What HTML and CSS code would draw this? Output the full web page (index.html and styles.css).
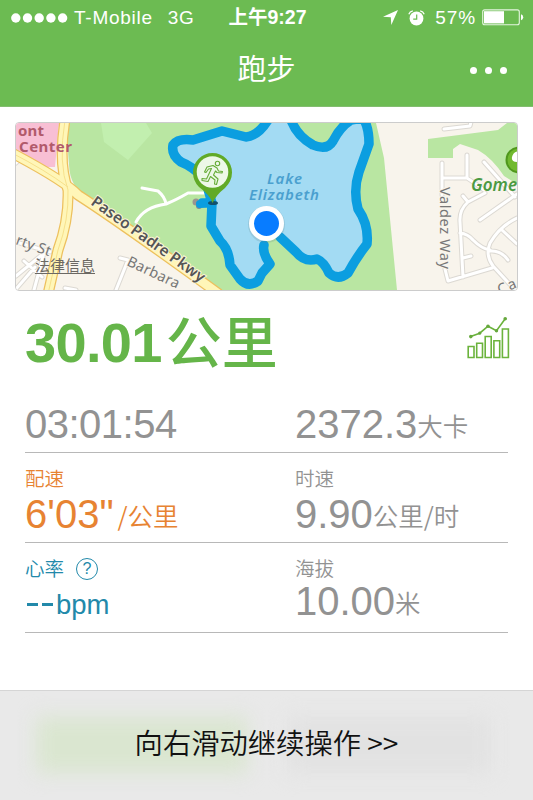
FILE: index.html
```html
<!DOCTYPE html>
<html lang="zh-CN">
<head>
<meta charset="utf-8">
<title>跑步</title>
<link rel="stylesheet" href="styles.css">
</head>
<body>
<div class="screen">
  <header class="header">
    <div class="status">
      <div class="status-left">
        <svg class="signal" width="57" height="10" viewBox="0 0 57 10"><g fill="#fff"><circle cx="4.8" cy="5" r="4.7"/><circle cx="16.5" cy="5" r="4.7"/><circle cx="28.2" cy="5" r="4.7"/><circle cx="39.9" cy="5" r="4.7"/><circle cx="51.6" cy="5" r="4.7"/></g></svg>
        <span class="carrier">T-Mobile</span>
        <span class="network">3G</span>
      </div>
      <div class="clock">上午9:27</div>
      <div class="status-right">
        <svg width="15" height="15" viewBox="0 0 15 15"><path d="M15 0L8.3 15L7.8 7.2L0 6.7Z" fill="#fff"/></svg>
        <svg class="alarm" width="17" height="16" viewBox="0 0 17 16"><circle cx="8.5" cy="8.500" r="6.900" fill="#fff"/><path d="M.8 4.200Q1.800 1.600 4.800.900M16.200 4.200Q15.200 1.600 12.200.900" stroke="#fff" stroke-width="1.200" fill="none"/><path d="M8.700 4.500V9.200H5.200" stroke="#6abb50" stroke-width="1.200" fill="none"/></svg>
        <span class="percent">57%</span>
        <svg class="battery" width="42" height="17" viewBox="0 0 42 17"><rect x=".7" y=".9" width="36.6" height="14.8" rx="2" fill="none" stroke="#e4f5df" stroke-width="1.1"/><rect x="2" y="2.2" width="20" height="12.2" fill="#fff"/><path d="M39 5.3Q41.2 6 41.2 8.3T39 11.3Z" fill="#fff"/></svg>
      </div>
    </div>
    <div class="navbar">
      <span></span>
      <h1 class="title">跑步</h1>
      <div class="more"><i></i><i></i><i></i></div>
    </div>
  </header>

  <main class="content">
    <div class="map">
      <svg class="map-art" viewBox="16 123 501 167" width="501" height="167">
        <rect x="16" y="123" width="501" height="167" fill="#f8f4ec"/>
        <path d="M66 123H376L384 158L397 290H219L180 259L88 198Q70 188 69 165Z" fill="#b9e6a2"/>
        <path d="M101 123L104 142L128 160L152 133L146 123Z" fill="#c2efaf"/>
        <path d="M16 123H59L55 167H45L16 153Z" fill="#f8bfd4"/>
        <path d="M428 139L498 130L507 123H517V184L504 176Q492 158 478 150L460 144L453 149V158H428Z" fill="#b9e6a2"/>
        <!-- minor streets -->
        <g fill="none" stroke-linecap="round" stroke-linejoin="round">
          <g stroke="#dcd9d3" stroke-width="5">
            <path d="M444 129L470 126L471 122M442 163V178H467V155M467 178Q475 183 484 190M484 162L515 197M442 178V195M445 269L448 281L492 268M463 196L468 202L485 193M517 194L480 220M468 202Q459 210 460 222L463 277M460 233Q468 234 473 240Q482 249 490 250M463 258L471 256M517 218Q500 226 490 243Q485 255 493 266L515 290M490 251Q501 250 508 260M502 230L517 244"/>
            <path d="M120 258L128 260L116 290M16 163L22 157M16 242L50 252M16 276L44 253L34 290M24 261L42 277M16 289L35 267M65 288L76 290"/>
          </g>
          <g stroke="#fff" stroke-width="3">
            <path d="M444 129L470 126L471 122M442 163V178H467V155M467 178Q475 183 484 190M484 162L515 197M442 178V195M445 269L448 281L492 268M463 196L468 202L485 193M517 194L480 220M468 202Q459 210 460 222L463 277M460 233Q468 234 473 240Q482 249 490 250M463 258L471 256M517 218Q500 226 490 243Q485 255 493 266L515 290M490 251Q501 250 508 260M502 230L517 244"/>
            <path d="M120 258L128 260L116 290M16 163L22 157M16 242L50 252M16 276L44 253L34 290M24 261L42 277M16 289L35 267M65 288L76 290"/>
          </g>
          <path d="M142 188L158 191Q165 197 166 204M136 222Q144 207 166 204Q176 200 188 193L204 193" stroke="#fff" stroke-width="3"/>
        </g>
        <!-- main roads -->
        <g fill="none" stroke-linejoin="round">
          <path d="M12 153Q65 181 78 195Q120 222 219 294M65 120Q58 163 68 190Q69 220 58 250L48 294" stroke="#edc05e" stroke-width="11"/>
          <path d="M12 153Q65 181 78 195Q120 222 219 294M65 120Q58 163 68 190Q69 220 58 250L48 294" stroke="#fff6b8" stroke-width="8.5"/>
          <path d="M65 120Q58 163 68 190Q69 220 58 250L48 294M12 153Q45 170 68 187" stroke="#f6e08c" stroke-width="1"/>
        </g>
        <!-- lake with the recorded track round it -->
        <path d="M205 179Q192 166 181 162Q171 155 173 145Q178 138 193 140L222 131L246 137Q258 136 267 123H293Q297 136 313 145Q327 151 333 141Q340 127 351 120L363 118Q369 127 369 144L359 172Q353 190 358 209Q369 225 367 244Q356 258 348 273Q338 281 329 273Q324 262 317 259Q305 263 296 252L280 237L266 225L263 249L272 264L264 270L258 283Q250 290 240 281L230 265Q229 249 220 241L211 226L212 204Z" fill="#a3dbf3"/>
        <path d="M212 203L205 179Q192 166 181 162Q171 155 173 145Q178 138 193 140L222 131L246 137Q258 136 268 120M291 120Q297 136 313 145Q327 151 333 141Q340 127 351 120L363 118Q369 127 369 144L359 172Q353 190 358 209Q369 225 367 244Q356 258 348 273Q338 281 329 273Q324 262 317 259Q305 263 296 252L280 237M264 245Q262 253 270 264L262 273L258 281Q248 288 240 279L230 265Q229 249 220 241L211 226L212 203L202 203" fill="none" stroke="#0b9ee0" stroke-width="9.500" stroke-linejoin="round" stroke-linecap="round"/>
        <circle cx="196" cy="202" r="3.500" fill="#9b9590"/><circle cx="199" cy="206" r="3" fill="#7f8a94"/>
        <path d="M200 204L211 202" stroke="#0b9ee0" stroke-width="8" stroke-linecap="round"/>
        <ellipse cx="213" cy="203" rx="5" ry="2" fill="#12516d"/>
        <!-- start pin -->
        <path d="M212.500 203Q210 195 199 187Q193 181 193 172.500A19.500 19.500 0 0 1 232 172.500Q232 181 225 188Q216 195 212.500 203Z" fill="#61aa27"/>
        <circle cx="212.500" cy="172" r="15.800" fill="#edf8e7"/>
        <g fill="none" stroke="#66ac37" stroke-width="1.100" stroke-linejoin="round"><circle cx="217.500" cy="163.500" r="2.200"/><path d="M207 167L213 165.500L217 168L218.500 171L222.500 171.500L222 173L217 172.500L215.500 171L213.500 175L218 179L216.500 184.500L214.500 184L215 180L210.500 176.500L208 181.500L202 180.500V178.500L206.500 179L211.500 168.500L208.500 169L206 172.500L204.500 172Z"/></g>
        <!-- current position -->
        <circle cx="266.500" cy="224.500" r="18.500" fill="#63828f" opacity=".22"/>
        <circle cx="266.500" cy="223.500" r="17.500" fill="#fff"/>
        <circle cx="266.500" cy="223.500" r="12.500" fill="#087cff"/>
        <!-- park -->
        <circle cx="519" cy="160" r="13.500" fill="#4f971c"/>
        <circle cx="519" cy="160" r="11.500" fill="#71b92f"/>
        <path d="M517 167V162Q511 162 512 157Q513 152 519 151V167Z" fill="#fff"/>
        <g class="map-text">
          <g class="place"><text x="18" y="136" textLength="26">ont</text><text x="19" y="152" textLength="53">Center</text></g>
          <g class="water"><text x="267" y="184" textLength="35">Lake</text><text x="249" y="200" textLength="70">Elizabeth</text></g>
          <text class="park" x="471" y="191" textLength="46">Gome</text>
          <text class="road" transform="translate(90 204) rotate(35.500)" textLength="136">Paseo Padre Pkwy</text>
          <text class="street" transform="translate(126 265) rotate(25)" textLength="56">Barbara</text>
          <text class="street" transform="translate(15 244) rotate(20)" textLength="36">rty St</text>
          <text class="street" transform="translate(440 187) rotate(90)" textLength="82">Valdez Way</text>
          <text class="street" transform="translate(500 295) rotate(-24)" textLength="19">Ca</text>
        </g>
      </svg>
      <span class="legal">法律信息</span>
    </div>

    <section class="distance">
      <div class="distance-value"><b>30.01</b><span>公里</span></div>
      <svg class="chart" width="44" height="44" viewBox="466 316 44 44"><g fill="none" stroke="#6bb33c" stroke-width="1.600"><path d="M468.200 346.500h5.800v11h-5.800zM476.700 343.300h5.800v14.200h-5.800zM485.200 336.500h6v21h-6zM493.900 340.700h5.800v16.800h-5.800zM502.400 329h6v28.500h-6z"/><path d="M470.600 336.600L479.700 333.200L488 326.200L496.500 330.800L505.200 318.800"/></g><g fill="#66a83d"><circle cx="470.800" cy="336.600" r="1.800"/><circle cx="479.700" cy="333.200" r="1.600"/><circle cx="488" cy="326.200" r="1.800"/><circle cx="496.500" cy="330.800" r="1.700"/><circle cx="505.200" cy="318.800" r="1.800"/></g></svg>
    </section>

    <section class="stats">
      <div class="row row-total">
        <div class="cell"><div class="value time">03:01:54</div></div>
        <div class="cell"><div class="value">2372.3<span class="unit">大卡</span></div></div>
      </div>
      <div class="row row-speed">
        <div class="cell pace"><div class="label">配速</div><div class="value">6'03"<span class="unit">/公里</span></div></div>
        <div class="cell"><div class="label">时速</div><div class="value">9.90<span class="unit">公里/时</span></div></div>
      </div>
      <div class="row row-body">
        <div class="cell heart"><div class="label">心率<span class="help">?</span></div><div class="value"><span class="dashes"><i></i><i></i></span><span class="bpm">bpm</span></div></div>
        <div class="cell"><div class="label">海拔</div><div class="value">10.00<span class="unit">米</span></div></div>
      </div>
    </section>
  </main>

  <footer class="slider"><span>向右滑动继续操作 &gt;&gt;</span></footer>
</div>
</body>
</html>
```
FILE: styles.css
```css
* { box-sizing: border-box; }

body {
  margin: 0;
  background: #fff;
  font-family: "Liberation Sans", "Noto Sans CJK SC", sans-serif;
}

.screen {
  display: flex;
  flex-direction: column;
  width: 533px;
  height: 800px;
  overflow: hidden;
}

.header {
  height: 107px;
  background: #6cbb52;
  border-bottom: 1px solid #83bd70;
  color: #fff;
}

.status {
  display: grid;
  grid-template-columns: 1fr auto 1fr;
  align-items: center;
  height: 35px;
  padding: 0 9px 0 11px;
  font-size: 19px;
  line-height: 35px;
}

.status-left, .status-right { display: flex; align-items: center; }
.status-right { justify-content: flex-end; }
.carrier { margin-left: 6px; letter-spacing: 0.75px; }
.network { margin-left: 15px; letter-spacing: 0.5px; }
.clock { font-weight: 700; font-size: 19.5px; }
.alarm { margin-left: 10px; }
.percent { margin: 0 6px 0 10px; letter-spacing: 0.9px; }

.navbar {
  display: grid;
  grid-template-columns: 1fr auto 1fr;
  align-items: center;
  height: 70px;
  padding: 0 26px;
}

.title {
  margin: 0;
  font-size: 29px;
  font-weight: 400;
  line-height: 60px;
}

.more { display: flex; justify-content: flex-end; gap: 8px; }
.more i { width: 7px; height: 7px; border-radius: 50%; background: #fff; }

.content { flex: 1; padding: 15px 15px 0; }

.map {
  position: relative;
  width: 503px;
  height: 169px;
  border: 1px solid #ccc;
  border-radius: 4px;
  overflow: hidden;
}

.map-art { display: block; }

.map-text { font-family: "Noto Sans", sans-serif; font-size: 14.5px; }
.place { fill: #b15a6b; font-weight: 700; font-size: 15px; }
.water { fill: #4aa0cf; font-style: italic; font-weight: 600; font-size: 15px; }
.park { fill: #4b9a43; font-style: italic; font-weight: 600; font-size: 17px; }
.road { fill: #555; font-weight: 600; paint-order: stroke; stroke: #fbf5d8; stroke-width: 2px; font-size: 15.5px; }
.street { fill: #777; paint-order: stroke; stroke: #f8f4ec; stroke-width: 2px; }

.legal {
  position: absolute;
  left: 19px;
  top: 133px;
  font-size: 15px;
  line-height: 20px;
  color: #6b6863;
  text-decoration: underline;
  text-underline-offset: 2px;
}

.distance {
  display: flex;
  justify-content: space-between;
  height: 107px;
  padding: 24px 8px 0 10px;
}

.distance-value {
  display: flex;
  align-items: baseline;
  height: 56px;
  color: #65b549;
  font-size: 56px;
  line-height: 56px;
}

.distance-value b { letter-spacing: -0.7px; }

.distance-value span {
  margin-left: 4px;
  font-size: 56px;
  line-height: 46px;
  font-weight: 500;
  transform: translateY(1px);
}

.chart { margin-top: 1px; }

.stats { padding: 0 10px; color: #929292; }

.row {
  display: grid;
  grid-template-columns: 270px 1fr;
  height: 90px;
  border-bottom: 1px solid #b8b8b8;
}

.row-total { height: 55px; padding-top: 6px; }
.row-speed { padding-top: 16px; }
.row-body { padding-top: 16px; }

.label {
  display: flex;
  align-items: center;
  height: 20px;
  font-size: 19.5px;
  font-weight: 350;
  line-height: 20px;
}

.value {
  display: flex;
  align-items: baseline;
  height: 40px;
  font-size: 40px;
  line-height: 40px;
}

.time { letter-spacing: -0.5px; }
.row-speed .value { margin-top: 5px; }
.row-body .value { margin-top: 2px; }

.unit {
  font-family: "Noto Sans CJK SC", sans-serif;
  font-size: 25.5px;
  line-height: 26px;
  font-weight: 350;
  transform: translateY(-2px);
}

.pace { color: #e78332; }
.pace .unit { margin-left: 4px; }
.heart { color: #2289aa; }

.help {
  width: 22px;
  height: 22px;
  margin-left: 12px;
  border: 1px solid #2289aa;
  border-radius: 50%;
  font-size: 16px;
  line-height: 20px;
  text-align: center;
}

.dashes { display: flex; gap: 4px; margin: 0 3px 0 2px; transform: translateY(-8px); }
.dashes i { width: 11px; height: 3px; background: currentColor; }
.bpm { font-size: 27.5px; line-height: 27px; }
.heart .value { padding-top: 10px; }

.slider {
  display: flex;
  align-items: center;
  justify-content: center;
  height: 110px;
  padding-bottom: 9px;
  border-top: 1px solid #d5d5d5;
  background: #e9e9e9;
  position: relative;
  overflow: hidden;
  color: #111;
  font-family: "Noto Sans CJK SC", sans-serif;
  font-size: 28.3px;
  font-weight: 350;
}

.slider::before, .slider::after {
  content: "";
  position: absolute;
  top: 26px;
  height: 56px;
  filter: blur(10px);
}

.slider::before { left: 36px; width: 211px; background: #dae6d0; }
.slider::after { left: 287px; width: 204px; background: #e2e2e2; }
.slider span { position: relative; z-index: 1; }
```
